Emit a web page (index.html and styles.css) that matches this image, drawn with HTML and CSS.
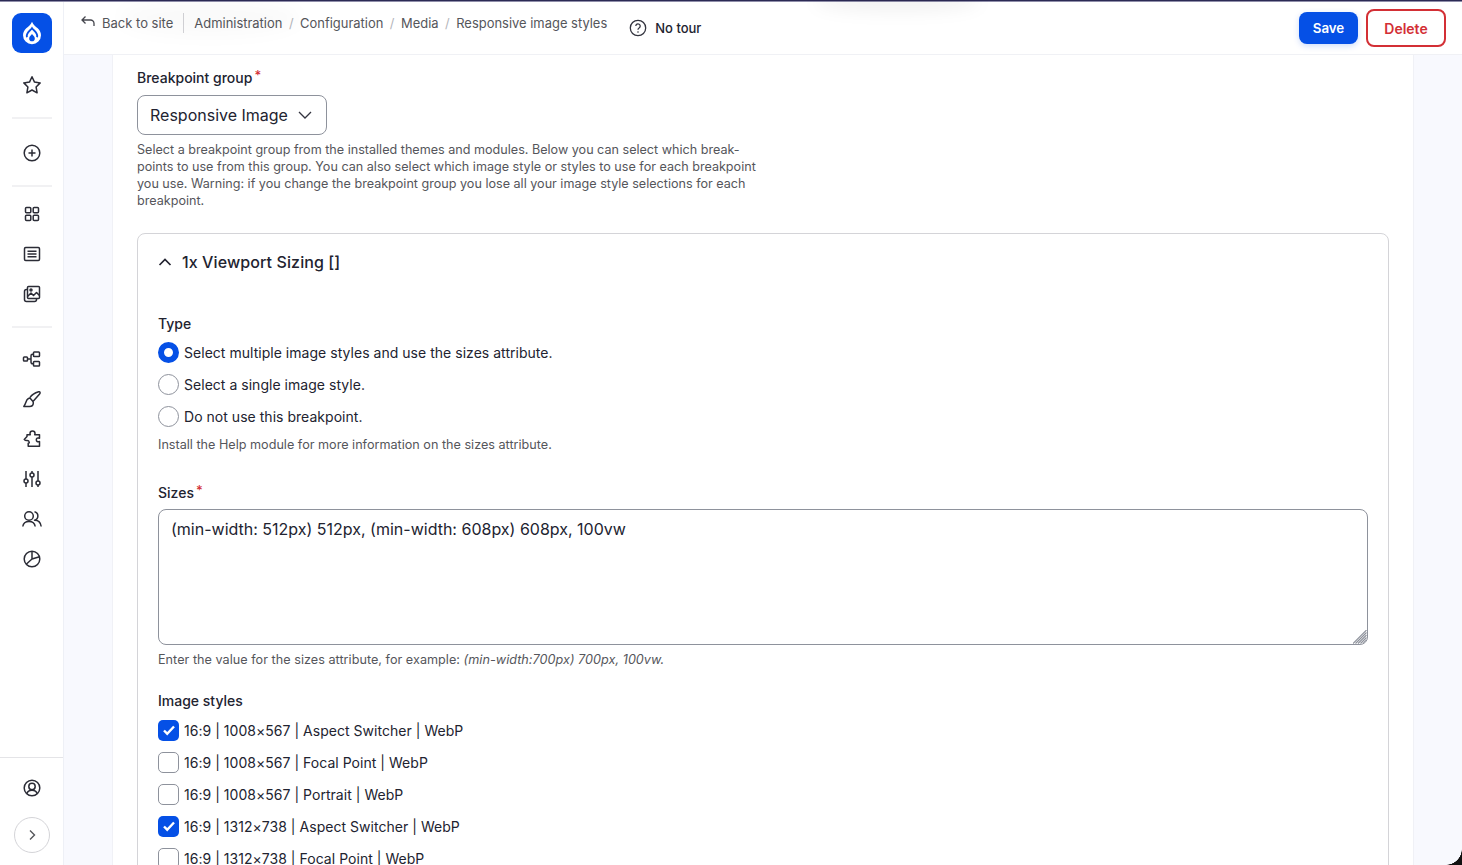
FILE: index.html
```html
<!DOCTYPE html>
<html lang="en">
<head>
  <meta charset="UTF-8" />
  <meta name="viewport" content="width=device-width, initial-scale=1.0"/>
  <title>Responsive image styles</title>
  <link rel="stylesheet" href="styles.css">
</head>
<body>
  <aside class="sidebar">
    <div class="logo">
      <svg viewBox="0 0 24 24" width="26" height="26">
        <path fill="#fff" d="M12 1.500c1 2.800 3.300 4.300 5.300 6.200 1.800 1.800 3 3.800 3 6.300a8.300 8.300 0 0 1-16.600 0c0-2.500 1.200-4.500 3-6.300C8.700 5.800 11 4.300 12 1.500z"/>
        <path fill="none" stroke="#0550e6" stroke-width="1.700" d="M7.300 16c-.7-2.800 1-4.700 2.700-6.300.8-.7 1.500-1.400 2-2.200.5.800 1.200 1.500 2 2.200 1.700 1.600 3.400 3.500 2.700 6.300"/>
        <path fill="#0550e6" d="M12 13c.8 1.300 2.600 2.300 2.600 4.100a2.600 2.600 0 0 1-5.200 0c0-1.800 1.800-2.800 2.600-4.100z"/>
      </svg>
    </div>
    <a class="nav-icon nav-star">
      <svg viewBox="0 0 20 20"><path d="M10 1.800l2.500 5.300 5.700.8-4.100 4.100 1 5.800-5.100-2.800-5.100 2.800 1-5.800L1.800 7.900l5.700-.8z"/></svg>
    </a>
    <hr class="nav-rule nav-rule-first">
    <a class="nav-icon">
      <svg viewBox="0 0 20 20"><circle cx="10" cy="10" r="7.800"/><path d="M10 6.500v7M6.500 10h7"/></svg>
    </a>
    <hr class="nav-rule">
    <div class="nav-group">
      <a class="nav-icon">
        <svg viewBox="0 0 20 20"><rect x="3.500" y="3.500" width="5.300" height="5.300" rx="1"/><rect x="11.200" y="3.500" width="5.300" height="5.300" rx="1"/><rect x="3.500" y="11.200" width="5.300" height="5.300" rx="1"/><rect x="11.200" y="11.200" width="5.300" height="5.300" rx="1"/></svg>
      </a>
      <a class="nav-icon">
        <svg viewBox="0 0 20 20"><rect x="2.500" y="3.500" width="15" height="13" rx="1.200"/><path d="M5.500 7.200h9M5.500 10h9M5.500 12.800h9"/></svg>
      </a>
      <a class="nav-icon">
        <svg viewBox="0 0 20 20"><rect x="5.500" y="2.500" width="12" height="12" rx="1"/><path d="M5.500 5.500h-1a2 2 0 0 0-2 2v8a2 2 0 0 0 2 2h8a2 2 0 0 0 2-2v-1M5.500 12.500l3.500-3.500 2.500 2.500 3-3 3 3"/><circle cx="9" cy="6" r="1"/></svg>
      </a>
    </div>
    <hr class="nav-rule nav-rule-last">
    <div class="nav-group">
      <a class="nav-icon">
        <svg viewBox="0 0 20 20"><rect x="1.500" y="8" width="4" height="4" rx=".8"/><rect x="11.500" y="3" width="6" height="4.500" rx=".8"/><rect x="11.500" y="12.500" width="6" height="4.500" rx=".8"/><path d="M5.500 10h3.500M11.500 5.200H10.500a1.500 1.500 0 0 0-1.500 1.500v6.600a1.500 1.500 0 0 0 1.500 1.500h1"/></svg>
      </a>
      <a class="nav-icon">
        <svg viewBox="0 0 20 20"><path d="M1.800 17.500h5.700c2.300 0 3.800-1.600 3.800-3.500 0-.5-.1-1-.3-1.400L17.600 5c1-1.200.5-2.600-1-2.200-3.400 1-6.800 3-8.700 5.800-.5.700-1.200.8-2 1.300-2 1.300-1.800 4.800-4.100 7.600zM7.700 8.800l3.300 3.800"/></svg>
      </a>
      <a class="nav-icon">
        <svg viewBox="0 0 20 20"><path d="M8 4.500C8 3.100 9 2 10.500 2S13 3.100 13 4.500c0 .5-.2.900-.3 1.300h4.800v3.400c-2-.8-3.200.2-3.200 1.600 0 1.500 1.200 2.500 3.200 1.700v4.700H6.200v-3c1 .1 1.200-.7 1-1.300-.2-.8-1-1.300-2-1.300-1 0-2 .2-3-1.200L5 7.500V5.800h3.300c-.2-.4-.3-.8-.3-1.300z"/></svg>
      </a>
      <a class="nav-icon">
        <svg viewBox="0 0 20 20"><path d="M4 2v8M4 14v4M10 2v2M10 8v10M16 2v10M16 16v2"/><circle cx="4" cy="12" r="2"/><circle cx="10" cy="6" r="2"/><circle cx="16" cy="14" r="2"/></svg>
      </a>
      <a class="nav-icon">
        <svg viewBox="0 0 20 20"><circle cx="7" cy="7" r="4.300"/><path d="M.8 17.500c.4-3.100 3-5 6.200-5s5.800 1.900 6.200 5M12.500 2.800a4.300 4.300 0 0 1 0 8.400c3.300-.1 6.200 2.100 6.700 6.300"/></svg>
      </a>
      <a class="nav-icon">
        <svg viewBox="0 0 20 20"><circle cx="10" cy="10" r="7.800"/><path d="M10 2.200V10l-5.800 5.200M10 10l7.500-2.200"/></svg>
      </a>
    </div>
    <div class="sidebar-foot">
      <a class="nav-icon">
        <svg viewBox="0 0 20 20"><circle cx="10" cy="10" r="7.800"/><circle cx="10" cy="8.500" r="3.200"/><path d="M4.800 15.800c.6-2.200 2.700-3.500 5.200-3.500s4.600 1.300 5.200 3.500"/></svg>
      </a>
      <button class="expand">
        <svg viewBox="0 0 12 12" width="12" height="12"><path d="M4 1.500L8.500 6 4 10.500"/></svg>
      </button>
    </div>
  </aside>

  <div class="main">
    <header class="topbar">
      <a class="back-link">
        <svg viewBox="0 0 16 16" width="16" height="16"><path d="M5.500 2.500L2 6l3.500 3.500M2 6h8.500A3.500 3.500 0 0 1 14 9.500V12"/></svg>
        Back to site
      </a>
      <nav class="breadcrumb">
        <a>Administration</a><i>/</i><a>Configuration</a><i>/</i><a>Media</a><i>/</i><a>Responsive image styles</a>
      </nav>
      <a class="tour">
        <svg viewBox="0 0 18 18" width="18" height="18"><circle cx="9" cy="9" r="7.700"/><path d="M6.800 7a2.200 2.200 0 1 1 3.300 2c-.7.400-1.100.9-1.100 1.700"/><circle class="dot" cx="9" cy="13" r=".8"/></svg>
        No tour
      </a>
      <div class="actions">
        <button class="btn-save">Save</button>
        <button class="btn-delete">Delete</button>
      </div>
    </header>

    <main class="page">
      <form class="card">
        <div class="field-group">
          <label class="label required">Breakpoint group</label>
          <div class="select">
            Responsive Image
            <svg viewBox="0 0 14 14" width="14" height="14"><path d="M1 4l6 6 6-6"/></svg>
          </div>
          <p class="help help-wide">Select a breakpoint group from the installed themes and modules. Below you can select which break-<br>points to use from this group. You can also select which image style or styles to use for each breakpoint<br>you use. Warning: if you change the breakpoint group you lose all your image style selections for each<br>breakpoint.</p>
        </div>

        <section class="details">
          <h2 class="details-title">
            <svg viewBox="0 0 14 14" width="14" height="14"><path d="M1.500 10L7 4.500l5.500 5.500"/></svg>
            1x Viewport Sizing []
          </h2>

          <div class="label type-label">Type</div>
          <div class="option"><span class="radio radio-on"></span>Select multiple image styles and use the sizes attribute.</div>
          <div class="option"><span class="radio"></span>Select a single image style.</div>
          <div class="option"><span class="radio"></span>Do not use this breakpoint.</div>
          <p class="help help-type">Install the Help module for more information on the sizes attribute.</p>

          <label class="label required sizes-label">Sizes</label>
          <div class="textarea">
            (min-width: 512px) 512px, (min-width: 608px) 608px, 100vw
            <svg class="grip" viewBox="0 0 14 14" width="14" height="14"><path d="M0 13.500L13.500 0M2.500 13.500L13.500 2.500M5 13.500L13.500 5M7.500 13.500l6-6M10 13.500l3.500-3.500"/></svg>
          </div>
          <p class="help help-sizes">Enter the value for the sizes attribute, for example: <em>(min-width:700px) 700px, 100vw.</em></p>

          <div class="label styles-label">Image styles</div>
          <div class="option"><span class="check check-on"><svg viewBox="0 0 14 14" width="14" height="14"><path d="M2 7.500l3.200 3.200L12 3.500"/></svg></span>16:9 | 1008×567 | Aspect Switcher | WebP</div>
          <div class="option"><span class="check"></span>16:9 | 1008×567 | Focal Point | WebP</div>
          <div class="option"><span class="check"></span>16:9 | 1008×567 | Portrait | WebP</div>
          <div class="option"><span class="check check-on"><svg viewBox="0 0 14 14" width="14" height="14"><path d="M2 7.500l3.200 3.200L12 3.500"/></svg></span>16:9 | 1312×738 | Aspect Switcher | WebP</div>
          <div class="option"><span class="check"></span>16:9 | 1312×738 | Focal Point | WebP</div>
        </section>
      </form>
    </main>
  </div>

  <div class="window-blur window-blur-a"></div>
  <div class="window-blur window-blur-b"></div>
  <div class="window-corner"></div>
</body>
</html>
```

FILE: styles.css
```css
:root {
  --text: #222330;
  --text-light: #55565b;
  --blue: #0550e6;
  --red: #d32f35;
  --line: #d4d4d8;
  --control: #8e929c;
  --page-bg: #f8f9fe;
}

* {
  box-sizing: border-box;
}

html, body {
  height: 100%;
}

body {
  margin: 0;
  display: flex;
  height: 865px;
  overflow: hidden;
  border-top: 1px solid #2c2a55;
  font-family: 'Inter', sans-serif;
  font-size: 14px;
  color: var(--text);
  background: var(--page-bg);
}

/* softer second pixel of the dark line along the top */
body::before {
  content: "";
  position: absolute;
  top: 1px;
  left: 0;
  right: 0;
  height: 1px;
  background: #8f8eaa;
}

/* sidebar */
.sidebar {
  flex: 0 0 64px;
  display: flex;
  flex-direction: column;
  align-items: center;
  background: #fff;
  border-right: 1px solid #eef0f6;
}

.logo {
  width: 40px;
  height: 40px;
  margin-top: 12px;
  border-radius: 9px;
  background: var(--blue);
  display: flex;
  align-items: center;
  justify-content: center;
}

.nav-icon {
  display: flex;
  align-items: center;
  justify-content: center;
  width: 40px;
  height: 40px;
}

.nav-icon svg {
  width: 20px;
  height: 20px;
  fill: none;
  stroke: #2b2c36;
  stroke-width: 1.5;
  stroke-linejoin: round;
}

.nav-star {
  margin-top: 12px;
}

.nav-rule {
  width: 40px;
  height: 2px;
  margin: 12px 0 7px;
  border: 0;
  background: #f1f1f3;
}

.nav-rule-first {
  margin-bottom: 14px;
}

.nav-rule-last {
  margin-bottom: 11px;
}

.nav-group {
  display: flex;
  flex-direction: column;
}

.sidebar-foot {
  margin-top: auto;
  width: 100%;
  padding: 10px 0 12px;
  display: flex;
  flex-direction: column;
  align-items: center;
  gap: 9px;
  border-top: 1px solid #e4e4e7;
}

.expand {
  width: 36px;
  height: 36px;
  padding: 0;
  border: 1px solid #d4d4d8;
  border-radius: 50%;
  background: #fff;
  display: flex;
  align-items: center;
  justify-content: center;
}

.expand svg {
  fill: none;
  stroke: #55565b;
  stroke-width: 1.4;
}

/* top bar */
.main {
  flex: 1;
  min-width: 0;
  display: flex;
  flex-direction: column;
}

.topbar {
  flex: 0 0 54px;
  display: flex;
  align-items: flex-start;
  background: #fff;
  border-bottom: 1px solid #f0f1f5;
  padding-left: 16px;
  padding-right: 16px;
}

.back-link {
  display: flex;
  align-items: center;
  gap: 6px;
  height: 20px;
  margin-top: 12px;
  font-size: 13px;
  color: var(--text-light);
  line-height: 20px;
}

.back-link svg {
  margin-bottom: 3px;
  fill: none;
  stroke: #44454d;
  stroke-width: 1.3;
}

.breadcrumb {
  display: flex;
  align-items: center;
  height: 20px;
  margin-top: 12px;
  margin-left: 10px;
  padding-left: 10px;
  border-left: 1px solid #d4d4d8;
  font-size: 12.950px;
  color: var(--text-light);
  line-height: 20px;
}

.breadcrumb i {
  font-style: normal;
  margin: 0 6.500px;
  color: #b4b5bb;
}

.tour {
  display: flex;
  align-items: center;
  gap: 8px;
  height: 20px;
  margin-top: 17px;
  margin-left: 22px;
  font-size: 13px;
  font-weight: 500;
}

.tour svg {
  fill: none;
  stroke: #33343f;
  stroke-width: 1.3;
}

.tour .dot {
  fill: #33343f;
  stroke: none;
}

.actions {
  margin-left: auto;
  display: flex;
  align-items: center;
  gap: 8px;
  margin-top: 8px;
}

.btn-save, .btn-delete {
  font-family: inherit;
  font-size: 14px;
  font-weight: 600;
  border-radius: 8px;
}

.btn-save {
  width: 59px;
  height: 32px;
  border: 0;
  font-size: 13.300px;
  color: #fff;
  background: var(--blue);
  box-shadow: 0 2px 6px rgba(5, 80, 230, 0.2);
}

.btn-delete {
  width: 80px;
  height: 38px;
  border: 2px solid var(--red);
  color: var(--red);
  background: #fff;
}

/* page */
.page {
  flex: 1;
  min-height: 0;
  padding: 0 48px;
}

.card {
  height: 100%;
  background: #fff;
  border-left: 1px solid #f0f1f6;
  border-right: 1px solid #f0f1f6;
  padding: 11px 24px 0;
  overflow: hidden;
}

.label {
  display: block;
  font-weight: 500;
  line-height: 18px;
}

.required::after {
  content: "*";
  color: var(--red);
  margin-left: 2px;
  vertical-align: 3px;
  font-size: 13px;
}

.select {
  width: 190px;
  height: 40px;
  margin-top: 8px;
  padding: 0 14px 0 12px;
  display: flex;
  align-items: center;
  justify-content: space-between;
  border: 1px solid var(--control);
  border-radius: 8px;
  font-size: 16px;
}

.select svg {
  fill: none;
  stroke: #33343f;
  stroke-width: 1.3;
}

.help {
  margin: 0;
  font-size: 12.640px;
  line-height: 17px;
  color: var(--text-light);
}

.help-wide {
  margin-top: 6px;
  font-size: 12.600px;
}

.details {
  margin-top: 24px;
  border: 1px solid var(--line);
  border-radius: 8px;
  padding: 0 20px 0;
  min-height: 700px;
}

.details-title {
  margin: 0;
  padding-top: 18px;
  display: flex;
  align-items: center;
  gap: 10px;
  font-size: 16px;
  font-weight: 500;
  line-height: 20px;
  letter-spacing: .1px;
}

.details-title svg {
  fill: none;
  stroke: #222330;
  stroke-width: 1.7;
}

.type-label {
  margin-top: 43px;
  margin-bottom: 3px;
}

.option {
  display: flex;
  align-items: center;
  gap: 5px;
  height: 32px;
  padding-top: 2px;
  line-height: 30px;
  letter-spacing: .03px;
}

.radio, .check {
  flex: 0 0 21px;
  height: 21px;
  margin-top: -2px;
  border: 1px solid var(--control);
  background: #fff;
}

.radio {
  border-radius: 50%;
}

.radio-on {
  border: 6px solid var(--blue);
}

.check {
  border-radius: 5px;
}

.check-on {
  border: 0;
  background: var(--blue);
  display: flex;
  align-items: center;
  justify-content: center;
}

.check-on svg {
  fill: none;
  stroke: #fff;
  stroke-width: 2.4;
}

.help-type {
  margin-top: 4px;
}

.sizes-label {
  margin-top: 28px;
}

.textarea {
  position: relative;
  height: 136px;
  margin-top: 7px;
  padding: 9px 13px 9px 12px;
  border: 1px solid var(--control);
  border-radius: 8px;
  font-size: 16px;
  line-height: 20px;
  overflow: hidden;
}

.grip {
  position: absolute;
  right: 0;
  bottom: 0;
  fill: none;
  stroke: #8e929c;
  stroke-width: 1.100;
}

.help-sizes {
  margin-top: 6px;
  letter-spacing: .03px;
}

.styles-label {
  margin-top: 24px;
  margin-bottom: 4px;
}

/* capture artefacts: faint blurred patches along the top */
.window-blur {
  position: absolute;
  pointer-events: none;
  border-radius: 50%;
  filter: blur(8px);
}

.window-blur-a {
  left: 815px;
  top: -8px;
  width: 165px;
  height: 20px;
  background: rgba(0, 0, 0, 0.05);
}

.window-blur-b {
  left: 120px;
  top: 0;
  width: 180px;
  height: 36px;
  background: rgba(0, 0, 0, 0.02);
}

/* rounded window edge, bottom right of the capture */
.window-corner {
  position: absolute;
  right: 0;
  top: 849px;
  width: 16px;
  height: 16px;
  background: radial-gradient(circle at 0 0, transparent 15.500px, #111 16px);
}
```
